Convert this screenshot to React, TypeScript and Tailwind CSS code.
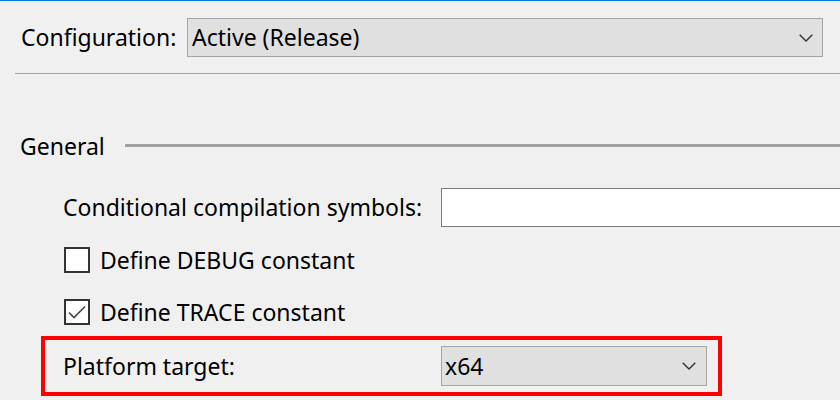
const font = { fontFamily: '"Noto Sans", "Open Sans", sans-serif' };

const Chevron = () => (
  <svg width="14" height="8" viewBox="0 0 14 8" fill="none">
    <path d="M0.7 0.7 L7 7 L13.3 0.7" stroke="#333" strokeWidth="1.4" />
  </svg>
);

const Checkbox = ({ checked }: { checked?: boolean }) => (
  <div className="w-[26px] h-[26px] border-2 border-[#333333] bg-white flex items-center justify-center shrink-0">
    {checked && (
      <svg width="20" height="16" viewBox="0 0 20 16" fill="none">
        <path d="M2 8.5 L7 13.5 L18 2.5" stroke="#444" strokeWidth="1.6" />
      </svg>
    )}
  </div>
);

export default function App() {
  return (
    <div
      className="w-[840px] h-[400px] bg-[#f0f0f0] border-t border-[#0078d7] text-[23px] text-black overflow-hidden"
      style={font}
    >
      {/* Configuration */}
      <div className="flex items-center pl-[21px] mt-[17px]">
        <span className="w-[166px] leading-none">Configuration:</span>
        <div className="w-[636px] h-[39px] bg-[#e0e0e0] border border-[#a5a5a5] flex items-center justify-between pl-[4px] pr-[9px]">
          <span className="leading-none">Active (Release)</span>
          <Chevron />
        </div>
      </div>

      <div className="ml-[15px] mt-[16px] h-px bg-[#a0a0a0]" />

      {/* General */}
      <div className="flex items-center mt-[61px]">
        <span className="pl-[20px] w-[125px] leading-none">General</span>
        <div className="flex-1 h-[3px] bg-[#a0a0a0] -mt-[3px]" />
      </div>

      <div className="pl-[63px] mt-[30px] flex items-center">
        <span className="w-[378px] leading-none">Conditional compilation symbols:</span>
        <div className="flex-1 h-[39px] bg-white border border-[#7a7a7a] border-r-0" />
      </div>

      <div className="pl-[64px] mt-[20px] flex items-center gap-[10px]">
        <Checkbox />
        <span className="leading-none">Define DEBUG constant</span>
      </div>

      <div className="pl-[64px] mt-[26px] flex items-center gap-[10px]">
        <Checkbox checked />
        <span className="leading-none">Define TRACE constant</span>
      </div>

      {/* Platform target */}
      <div className="ml-[41px] mt-[11px] w-[681px] h-[60px] border-4 border-[#ff0000] flex items-center pl-[18px]">
        <span className="w-[378px] leading-none">Platform target:</span>
        <div className="w-[266px] h-[40px] bg-[#e0e0e0] border border-[#a5a5a5] flex items-center justify-between pl-[3px] pr-[10px]">
          <span className="leading-none">x64</span>
          <Chevron />
        </div>
      </div>
    </div>
  );
}
